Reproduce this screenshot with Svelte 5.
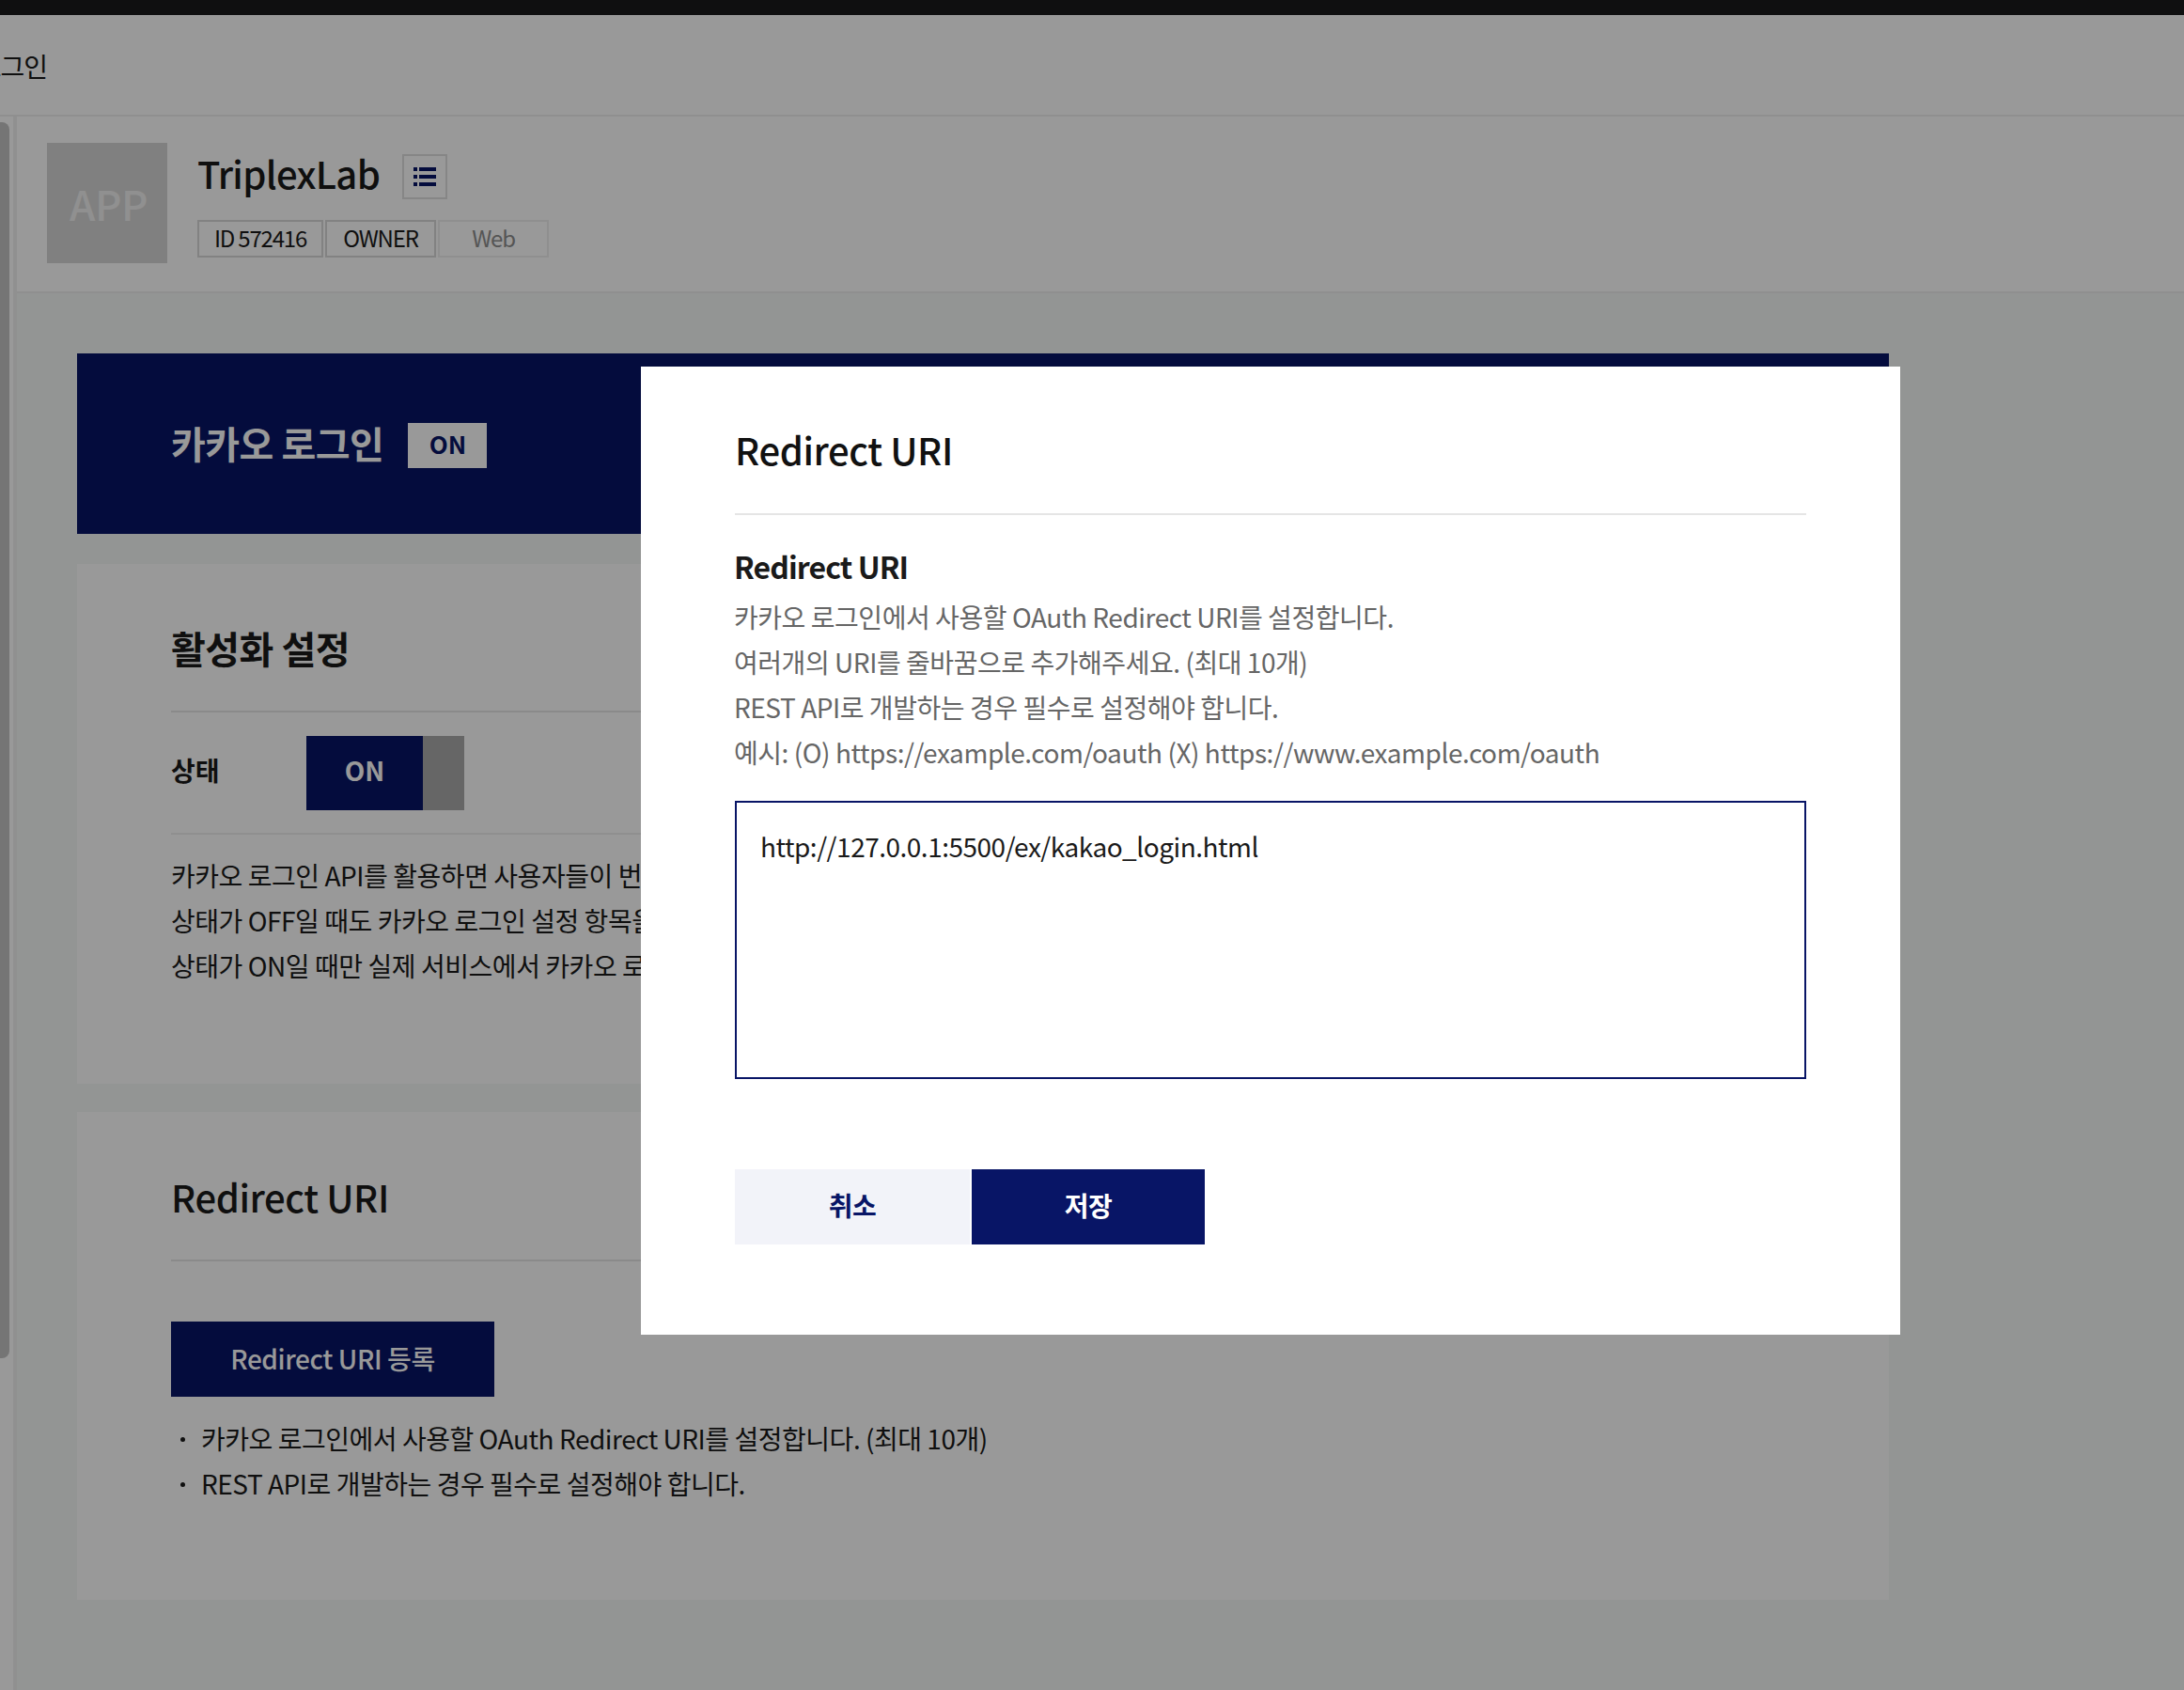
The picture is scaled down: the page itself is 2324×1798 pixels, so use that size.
<script lang="ts">
  const intro = [
    '카카오 로그인 API를 활용하면 사용자들이 번거로운 회원 가입 절차 대신, 카카오톡으로 서비스를 시작할 수 있습니다.',
    '상태가 OFF일 때도 카카오 로그인 설정 항목을 변경하고 서버에 저장할 수 있습니다.',
    '상태가 ON일 때만 실제 서비스에서 카카오 로그인 화면이 연결됩니다.'
  ]
  const notes = [
    '카카오 로그인에서 사용할 OAuth Redirect URI를 설정합니다. (최대 10개)',
    'REST API로 개발하는 경우 필수로 설정해야 합니다.'
  ]
  const help = [
    '카카오 로그인에서 사용할 OAuth Redirect URI를 설정합니다.',
    '여러개의 URI를 줄바꿈으로 추가해주세요. (최대 10개)',
    'REST API로 개발하는 경우 필수로 설정해야 합니다.',
    '예시: (O) https://example.com/oauth (X) https://www.example.com/oauth'
  ]
</script>

<div class="page">
  <div class="topbar"></div>
  <header class="nav"><span class="crumb">로그인</span></header>
  <div class="body">
    <div class="side"></div>
    <main>
      <section class="app">
        <div class="thumb">APP</div>
        <div class="meta">
          <div class="name">
            <h1>TriplexLab</h1>
            <button class="list" aria-label="목록">
              <svg width="24" height="20" viewBox="0 0 24 20" fill="#081566">
                <rect x="0" y="0" width="4" height="4" />
                <rect x="6" y="0" width="18" height="4" />
                <rect x="0" y="8" width="4" height="4" />
                <rect x="6" y="8" width="18" height="4" />
                <rect x="0" y="16" width="4" height="4" />
                <rect x="6" y="16" width="18" height="4" />
              </svg>
            </button>
          </div>
          <div class="tags">
            <span class="tag id">ID 572416</span>
            <span class="tag owner">OWNER</span>
            <span class="tag web">Web</span>
          </div>
        </div>
      </section>

      <div class="content">
        <div class="banner">
          <h2>카카오 로그인</h2>
          <span class="on">ON</span>
        </div>

        <section class="card first">
          <h3>활성화 설정</h3>
          <div class="status">
            <span class="label">상태</span>
            <div class="toggle"><span>ON</span></div>
          </div>
          <div class="desc">
            {#each intro as line}
              <p>{line}</p>
            {/each}
          </div>
        </section>

        <section class="card second">
          <h3 class="latin">Redirect URI</h3>
          <button class="add">Redirect URI 등록</button>
          <ul>
            {#each notes as note}
              <li>{note}</li>
            {/each}
          </ul>
        </section>
      </div>
    </main>
  </div>

  <div class="scrollbar"></div>

  <div class="dim">
    <div class="modal">
      <h4>Redirect URI</h4>
      <h5>Redirect URI</h5>
      <div class="help">
        {#each help as line}
          <p>{line}</p>
        {/each}
      </div>
      <div class="field">http://127.0.0.1:5500/ex/kakao_login.html</div>
      <div class="actions">
        <button class="cancel">취소</button>
        <button class="save">저장</button>
      </div>
    </div>
  </div>
</div>

<style>
  :global(body) {
    margin: 0;
    background: #f5f8f7;
  }

  .page {
    position: relative;
    width: 2324px;
    height: 1798px;
    overflow: hidden;
    display: flex;
    flex-direction: column;
    background: #f5f8f7;
    color: #1a1a1a;
    font-family: "Noto Sans CJK KR", "Noto Sans", sans-serif;
    font-size: 28px;
  }

  h1, h2, h3, h4, h5, p, ul {
    margin: 0;
    padding: 0;
  }

  button {
    font-family: inherit;
    border: 0;
    padding: 0;
  }

  .topbar {
    height: 16px;
    background: #1a1a1b;
  }

  .nav {
    height: 106px;
    background: #fff;
    border-bottom: 2px solid #eee;
    display: flex;
    align-items: center;
    box-sizing: content-box;
  }

  .crumb {
    width: 50px;
    padding-top: 2px;
    display: flex;
    justify-content: flex-end;
    overflow: hidden;
    white-space: nowrap;
    line-height: 40px;
    letter-spacing: -1px;
  }

  .body {
    flex: 1;
    display: flex;
  }

  .side {
    width: 14px;
    background: #fff;
    border-right: 4px solid #f0f0f0;
  }

  main {
    flex: 1;
  }

  .app {
    height: 186px;
    background: #fff;
    border-bottom: 2px solid #eee;
    box-sizing: content-box;
    display: flex;
    gap: 32px;
    padding-left: 32px;
    align-items: flex-start;
  }

  .thumb {
    width: 128px;
    height: 128px;
    box-sizing: border-box;
    margin-top: 28px;
    padding-left: 3px;
    background: #d6d6d6;
    color: #f0f0f0;
    font-size: 44px;
    font-weight: 500;
    line-height: 128px;
    letter-spacing: -0.5px;
    text-align: center;
  }

  .meta {
    display: flex;
    flex-direction: column;
    padding-top: 40px;
  }

  .name {
    display: flex;
    align-items: flex-start;
    gap: 24px;
    height: 48px;
  }

  h1 {
    font-size: 40px;
    font-weight: 500;
    line-height: 40px;
    letter-spacing: -0.7px;
  }

  .list {
    width: 48px;
    height: 48px;
    background: #fff;
    border: 2px solid #e0e0e0;
    display: flex;
    align-items: center;
    justify-content: center;
  }

  .tags {
    display: flex;
    gap: 2px;
    margin-top: 22px;
  }

  .tag {
    height: 40px;
    box-sizing: border-box;
    border: 2px solid #d9d9d9;
    font-size: 24px;
    line-height: 34px;
    text-align: center;
    letter-spacing: -1.2px;
  }

  .id { width: 134px; }
  .owner { width: 118px; }

  .web {
    width: 118px;
    border-color: #eee;
    color: #8e8e8e;
  }

  .content {
    width: 1928px;
    margin: 64px 0 0 64px;
    display: flex;
    flex-direction: column;
    gap: 30px;
  }

  .banner {
    height: 192px;
    margin-bottom: 2px;
    background: #081566;
    display: flex;
    align-items: center;
    gap: 26px;
    padding-left: 100px;
  }

  .banner h2 {
    padding-bottom: 2px;
    font-size: 40px;
    font-weight: 700;
    letter-spacing: -0.5px;
    color: #fff;
    line-height: 60px;
  }

  .on {
    width: 84px;
    height: 48px;
    margin-top: 4px;
    background: #fff;
    color: #081566;
    font-size: 26px;
    font-weight: 700;
    line-height: 43px;
    text-align: center;
  }

  .card {
    background: #fff;
    padding: 0 100px;
    box-sizing: border-box;
  }

  .first {
    height: 553px;
  }

  .second {
    height: 519px;
  }

  h3 {
    height: 97px;
    padding-top: 59px;
    line-height: 60px;
    border-bottom: 2px solid #e6e6e6;
    font-size: 40px;
    font-weight: 700;
    letter-spacing: -0.5px;
    box-sizing: content-box;
  }

  .status {
    display: flex;
    align-items: center;
    height: 128px;
    border-bottom: 2px solid #eee;
  }

  .label {
    width: 144px;
    padding-bottom: 6px;
    font-weight: 700;
  }

  .toggle {
    width: 168px;
    height: 79px;
    background: #aaa;
  }

  .toggle span {
    display: block;
    width: 124px;
    height: 79px;
    background: #081566;
    color: #fff;
    font-weight: 700;
    line-height: 72px;
    text-align: center;
  }

  .desc {
    margin-top: 19px;
  }

  .desc p, .help p {
    line-height: 48px;
    white-space: nowrap;
    letter-spacing: -0.45px;
  }

  h3.latin {
    height: 97px;
    padding-top: 60px;
    font-weight: 500;
    letter-spacing: -0.4px;
  }

  .add {
    display: block;
    width: 344px;
    height: 80px;
    margin-top: 64px;
    padding-bottom: 3px;
    background: #081566;
    color: #fff;
    font-size: 28px;
    font-weight: 500;
    letter-spacing: -0.4px;
  }

  ul {
    list-style: none;
    margin-top: 20px;
  }

  li {
    position: relative;
    padding-left: 32px;
    line-height: 48px;
    letter-spacing: -0.47px;
  }

  li::before {
    content: "";
    position: absolute;
    left: 10px;
    top: 23px;
    width: 5px;
    height: 5px;
    border-radius: 50%;
    background: #1a1a1a;
  }

  .scrollbar {
    position: absolute;
    left: 0;
    top: 130px;
    width: 10px;
    height: 1315px;
    background: #c3c3c3;
    border-radius: 0 8px 8px 0;
  }

  .dim {
    position: absolute;
    inset: 0;
    background: rgba(0, 0, 0, 0.4);
  }

  .modal {
    position: absolute;
    left: 682px;
    top: 390px;
    width: 1340px;
    height: 1030px;
    background: #fff;
    padding: 0 100px;
    box-sizing: border-box;
  }

  h4 {
    height: 98px;
    padding-top: 58px;
    border-bottom: 2px solid #e5e5e5;
    font-size: 40px;
    font-weight: 500;
    line-height: 60px;
    letter-spacing: -0.4px;
    color: #111;
    box-sizing: content-box;
  }

  h5 {
    margin: 29px 0 0 -1px;
    font-size: 32px;
    font-weight: 700;
    line-height: 50px;
    letter-spacing: -0.9px;
    color: #1a1a1a;
  }

  .help {
    margin: 5px 0 0 -1px;
    color: #666;
  }

  .field {
    height: 296px;
    margin-top: 28px;
    border: 2px solid #081566;
    padding: 22px 25px;
    box-sizing: border-box;
    line-height: 48px;
    letter-spacing: -0.5px;
    color: #1a1a1a;
  }

  .actions {
    display: flex;
    gap: 2px;
    margin-top: 96px;
  }

  .actions button {
    height: 80px;
    padding-bottom: 5px;
    font-size: 28px;
    font-weight: 700;
    letter-spacing: -0.5px;
  }

  .cancel {
    width: 250px;
    background: #f2f3f9;
    color: #081566;
  }

  .save {
    width: 248px;
    background: #081566;
    color: #fff;
  }
</style>
